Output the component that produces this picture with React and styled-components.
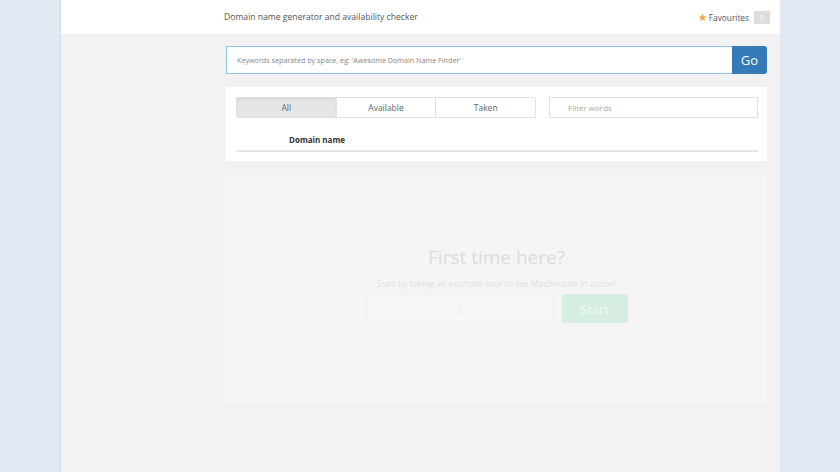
import React from 'react'
import styled, { createGlobalStyle } from 'styled-components'

const Global = createGlobalStyle`
  html, body {
    margin: 0;
    padding: 0;
    background: #e0e8f1;
    font-family: "Open Sans", "Liberation Sans", sans-serif;
  }
`

const Page = styled.div`
  width: 720px;
  min-height: 472px;
  margin-left: 60px;
  background: #f2f2f2;
  border-left: 1px solid #d3dde9;
  box-sizing: border-box;
`

const Header = styled.div`
  height: 34px;
  background: #fff;
  display: flex;
  align-items: center;
  justify-content: space-between;
  padding: 0 10px 0 163px;
`

const Title = styled.span`
  font-size: 8.6px;
  color: #555;
`

const Favs = styled.div`
  display: flex;
  align-items: center;
  gap: 2px;
  font-size: 8.3px;
  color: #555;
  margin-top: 1px;
`

const Badge = styled.span`
  background: #ddd;
  color: #fff;
  font-size: 7px;
  padding: 2px 6px;
  margin-left: 3px;
`

const Main = styled.div`
  display: grid;
  grid-template-columns: 165px 541px;
  padding: 12px 0 0;
`

const Content = styled.div`
  grid-column: 2;
  display: flex;
  flex-direction: column;
`

const SearchRow = styled.div`
  display: flex;
  height: 28px;
`

const SearchInput = styled.input`
  flex: 1;
  border: 1px solid #8fc1e6;
  border-right: none;
  font-family: inherit;
  font-size: 7.2px;
  padding: 0 10px;
  outline: none;
  &::placeholder { color: #888; }
`

const Go = styled.button`
  width: 35px;
  background: #337ab7;
  color: #fff;
  border: none;
  border-radius: 0 3px 3px 0;
  font-family: inherit;
  font-size: 13px;
`

const Panel = styled.div`
  margin-top: 13px;
  background: #fff;
  padding: 10px 9px 9px 10px;
`

const Controls = styled.div`
  display: flex;
  gap: 13px;
`

const BtnGroup = styled.div`
  display: flex;
  width: 300px;
`

const Seg = styled.button`
  flex: 1;
  height: 21px;
  border: 1px solid #e2e2e2;
  margin-left: -1px;
  background: ${p => (p.active ? '#e6e6e6' : '#fff')};
  box-shadow: ${p => (p.active ? 'inset 0 2px 3px rgba(0,0,0,0.06)' : 'none')};
  font-family: inherit;
  font-size: 8.5px;
  color: #666;
  &:first-child { margin-left: 0; border-radius: 2px 0 0 2px; }
  &:last-child { border-radius: 0 2px 2px 0; }
`

const Filter = styled.input`
  flex: 1;
  height: 21px;
  box-sizing: border-box;
  border: 1px solid #e2e2e2;
  font-family: inherit;
  font-size: 8px;
  padding: 0 18px;
  outline: none;
  &::placeholder { color: #aaa; }
`

const TableHead = styled.div`
  margin-top: 11px;
  height: 21px;
  border-bottom: 2px solid #e6e6e6;
  padding-left: 53px;
  font-size: 8px;
  font-weight: 700;
  color: #333;
  display: flex;
  align-items: center;
`

const Tour = styled.div`
  margin-top: 15px;
  height: 227px;
  background: #f5f5f5;
  display: flex;
  flex-direction: column;
  align-items: center;
  justify-content: center;
  padding-bottom: 12px;
  box-sizing: border-box;
`

const TourTitle = styled.div`
  font-size: 19px;
  color: #dcdcdc;
`

const TourText = styled.div`
  font-size: 8.6px;
  color: #e0e0e0;
  margin-top: 8px;
`

const TourRow = styled.div`
  display: flex;
  gap: 8px;
  margin-top: 4px;
`

const TourInput = styled.div`
  width: 186px;
  height: 26px;
  border: 1px solid #eee;
  background: #f6f6f6;
  display: flex;
  align-items: center;
  justify-content: center;
  font-size: 8px;
  color: #eaeaea;
`

const StartBtn = styled.button`
  width: 66px;
  height: 29px;
  border: none;
  border-radius: 3px;
  background: #d6ede2;
  color: #f4faf7;
  font-family: inherit;
  font-size: 13px;
`

const Star = () => (
  <svg width="9" height="9" viewBox="0 0 24 24">
    <path fill="#f0ad4e" d="M12 1.5l3.2 6.9 7.3.8-5.4 5 1.5 7.3L12 17.8l-6.6 3.7 1.5-7.3-5.4-5 7.3-.8z" />
  </svg>
)

export default function App() {
  return (
    <>
      <Global />
      <Page>
        <Header>
          <Title>Domain name generator and availability checker</Title>
          <Favs>
            <Star />
            Favourites
            <Badge>0</Badge>
          </Favs>
        </Header>
        <Main>
          <Content>
            <SearchRow>
              <SearchInput placeholder="Keywords separated by space, eg: 'Awesome Domain Name Finder'" />
              <Go>Go</Go>
            </SearchRow>
            <Panel>
              <Controls>
                <BtnGroup>
                  <Seg active>All</Seg>
                  <Seg>Available</Seg>
                  <Seg>Taken</Seg>
                </BtnGroup>
                <Filter placeholder="Filter words" />
              </Controls>
              <TableHead>Domain name</TableHead>
            </Panel>
            <Tour>
              <TourTitle>First time here?</TourTitle>
              <TourText>Start by taking an example tour to see Machiname in action!</TourText>
              <TourRow>
                <TourInput>|</TourInput>
                <StartBtn>Start</StartBtn>
              </TourRow>
            </Tour>
          </Content>
        </Main>
      </Page>
    </>
  )
}
